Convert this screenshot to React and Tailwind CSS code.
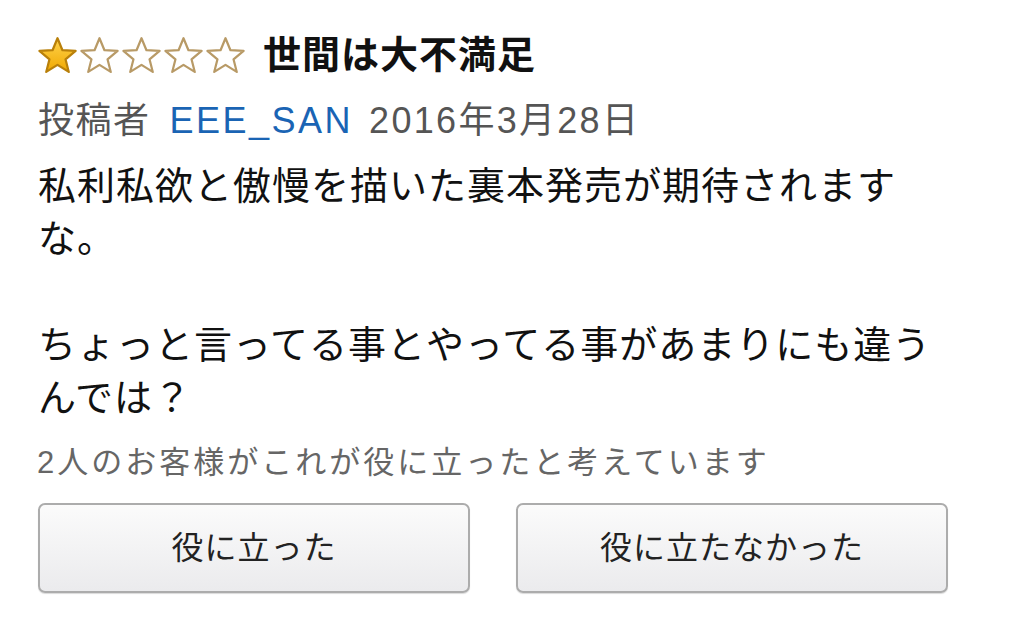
function Star({ filled }) {
  return (
    <svg viewBox="0 0 24 22" className="w-[41px] h-[38px]">
      <defs>
        <linearGradient id="gold" x1="0" y1="0" x2="0" y2="1">
          <stop offset="0" stopColor="#ffd34d" />
          <stop offset="1" stopColor="#f0a800" />
        </linearGradient>
      </defs>
      <polygon
        points="12,1.2 14.9,8.2 22.6,8.6 16.7,13.5 18.6,20.9 12,16.8 5.4,20.9 7.3,13.5 1.4,8.6 9.1,8.2"
        fill={filled ? "url(#gold)" : "#ffffff"}
        stroke={filled ? "#b9800a" : "#b89a66"}
        strokeWidth="1.3"
        strokeLinejoin="round"
      />
    </svg>
  );
}

function VoteButton({ children }) {
  return (
    <button className="w-[432px] h-[90px] rounded-[7px] border-2 border-[#acacac] bg-gradient-to-b from-[#fbfbfb] to-[#ebebed] shadow-[0_1px_1px_rgba(0,0,0,0.15)] text-[32px] tracking-[1px] text-[#222]">
      {children}
    </button>
  );
}

export default function App() {
  return (
    <div className="min-h-screen w-full bg-white font-['Liberation_Sans','Noto_Sans_CJK_JP',sans-serif]">
      <div className="pl-[37px] pt-[35px] flex flex-col">
        <div className="h-[40px] flex items-center">
          <div className="flex items-center gap-[1px]">
            <Star filled />
            <Star />
            <Star />
            <Star />
            <Star />
          </div>
          <h1 className="ml-[17px] text-[38px] leading-[40px] font-bold tracking-[1px] text-[#111]">
            世間は大不満足
          </h1>
        </div>

        <div className="mt-[21px] text-[36px] leading-[50px] text-[#555] flex items-center">
          <span className="ml-[1px] tracking-[1.5px]">投稿者</span>
          <span className="ml-[19px] text-[#1a64b4] tracking-[2.5px]">EEE_SAN</span>
          <span className="ml-[16px] tracking-[2.3px]">2016年3月28日</span>
        </div>

        <p className="mt-[14px] ml-[1px] w-[910px] text-[38px] leading-[53px] tracking-[1px] text-[#111]">
          私利私欲と傲慢を描いた裏本発売が期待されますな。
          <br />
          <br />
          ちょっと言ってる事とやってる事があまりにも違うんでは？
        </p>

        <div className="mt-[18px] text-[31px] leading-[40px] tracking-[3px] text-[#666]">
          2人のお客様がこれが役に立ったと考えています
        </div>

        <div className="mt-[20px] ml-[1px] flex gap-[46px]">
          <VoteButton>役に立った</VoteButton>
          <VoteButton>役に立たなかった</VoteButton>
        </div>
      </div>
    </div>
  );
}
